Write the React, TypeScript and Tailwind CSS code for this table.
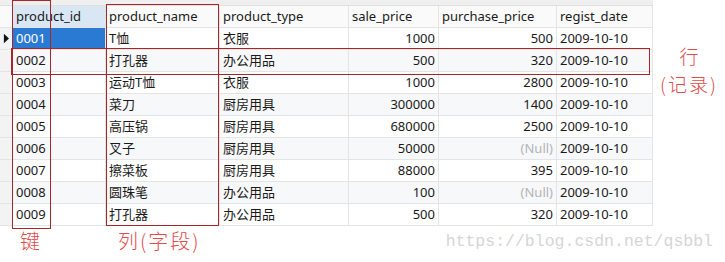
import React from 'react';

type Row = { id: string; name: string; type: string; sale: number; purchase: number | null; date: string };

const rows: Row[] = [
  { id: '0001', name: 'T恤', type: '衣服', sale: 1000, purchase: 500, date: '2009-10-10' },
  { id: '0002', name: '打孔器', type: '办公用品', sale: 500, purchase: 320, date: '2009-10-10' },
  { id: '0003', name: '运动T恤', type: '衣服', sale: 1000, purchase: 2800, date: '2009-10-10' },
  { id: '0004', name: '菜刀', type: '厨房用具', sale: 300000, purchase: 1400, date: '2009-10-10' },
  { id: '0005', name: '高压锅', type: '厨房用具', sale: 680000, purchase: 2500, date: '2009-10-10' },
  { id: '0006', name: '叉子', type: '厨房用具', sale: 50000, purchase: null, date: '2009-10-10' },
  { id: '0007', name: '擦菜板', type: '厨房用具', sale: 88000, purchase: 395, date: '2009-10-10' },
  { id: '0008', name: '圆珠笔', type: '办公用品', sale: 100, purchase: null, date: '2009-10-10' },
  { id: '0009', name: '打孔器', type: '办公用品', sale: 500, purchase: 320, date: '2009-10-10' },
];

const cell = 'h-[22px] flex items-center border-r border-b border-[#e4e4e4] px-[3px] whitespace-nowrap';
const note = { fontFamily: '"Noto Sans CJK SC", sans-serif', fontWeight: 300 };

export default function App() {
  return (
    <div
      className="relative w-[725px] h-[262px] bg-white overflow-hidden text-[13px] text-[#1a1a1a]"
      style={{ fontFamily: '"Noto Sans", "Noto Sans CJK SC", sans-serif' }}
    >
      <div className="flex">
        <div className="w-[653px]">
          {/* strip above header */}
          <div className="h-[6px] bg-[#efefef] border-b border-[#e0e0e0]" />
          {/* header */}
          <div className="grid grid-cols-[13px_93px_114px_129px_90px_118px_96px] bg-[#fafafa]">
            <div className={cell} />
            <div className={`${cell} bg-[#d9e7f4]`}>product_id</div>
            <div className={cell}>product_name</div>
            <div className={cell}>product_type</div>
            <div className={cell}>sale_price</div>
            <div className={cell}>purchase_price</div>
            <div className={cell}>regist_date</div>
          </div>
          {rows.map((r, i) => (
            <div
              key={r.id}
              className={`grid grid-cols-[13px_93px_114px_129px_90px_118px_96px] ${i % 2 === 0 ? 'bg-white' : 'bg-[#f7f8f9]'}`}
            >
              <div className={`${cell} px-0 justify-center bg-[#f3f3f3]`}>
                {i === 0 && (
                  <svg width="7" height="11" viewBox="0 0 7 11">
                    <path d="M1 0 L7 5.5 L1 11 Z" fill="#111" />
                  </svg>
                )}
              </div>
              <div className={`${cell} ${i === 0 ? 'bg-[#2a79d3] text-white' : ''}`}>{r.id}</div>
              <div className={cell}>{r.name}</div>
              <div className={cell}>{r.type}</div>
              <div className={`${cell} justify-end`}>{r.sale}</div>
              <div className={`${cell} justify-end`}>
                {r.purchase === null ? <span className="text-[#b4b4b4]">(Null)</span> : r.purchase}
              </div>
              <div className={cell}>{r.date}</div>
            </div>
          ))}
          {/* bottom annotations */}
          <div className="flex items-start h-[36px] pt-[2px]">
            <span className="ml-[20px] text-[20px] leading-[26px] text-[#e04b4b]" style={note}>键</span>
            <span className="ml-[78px] text-[20px] leading-[26px] tracking-[2px] text-[#e04b4b]" style={note}>列(字段)</span>
            <span
              className="ml-auto mr-[-60px] mt-[3px] text-[16.5px] leading-[22px] text-[#d6d6d6]"
              style={{ fontFamily: '"Liberation Mono", monospace' }}
            >
              https://blog.csdn.net/qsbbl
            </span>
          </div>
        </div>
        {/* right annotation */}
        <div className="flex-1 flex flex-col items-center pt-[42px] text-[19px] leading-[28px] text-[#e04b4b]" style={note}>
          <span>行</span>
          <span className="tracking-[2px]">(记录)</span>
        </div>
      </div>

      {/* red annotation boxes */}
      <div className="absolute left-[12px] top-0 w-[39px] h-[229px] border-[1.5px] border-[#a8262a]" />
      <div className="absolute left-[106px] top-[4px] w-[113px] h-[222px] border-[1.5px] border-[#a8262a]" />
      <div className="absolute left-[11px] top-[48px] w-[639px] h-[27px] border-[1.5px] border-[#a8262a]" />
    </div>
  );
}
